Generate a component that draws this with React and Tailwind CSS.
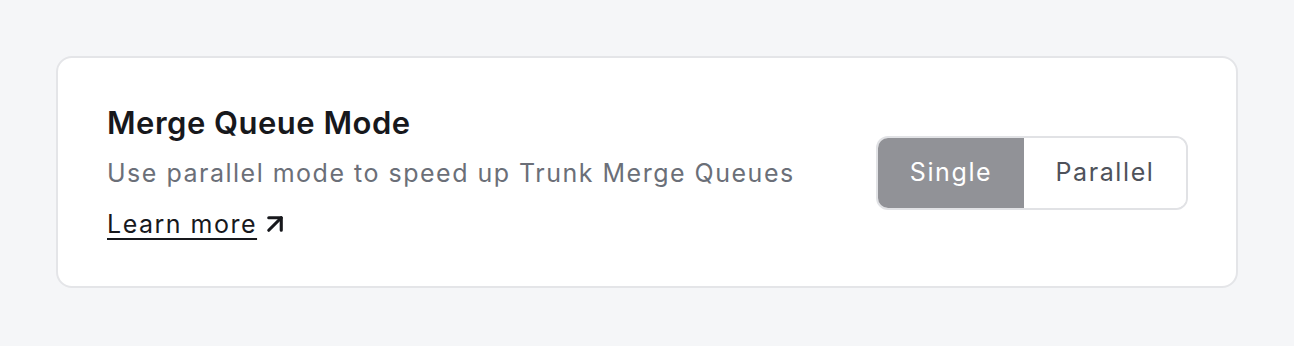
import { ArrowUpRight } from 'lucide-react';

export default function App() {
  return (
    <div className="min-h-screen bg-[#f5f6f8] p-[56px]" style={{ fontFamily: 'Inter, "Noto Sans", sans-serif' }}>
      <div className="flex items-center justify-between rounded-[16px] border-2 border-[#e4e5e8] bg-white pl-[49px] pr-[48px] pt-[47px] pb-[46px]">
        <div className="flex flex-col">
          <h2 className="text-[31px] font-semibold leading-[36px] tracking-[0.5px] text-[#17181c]">Merge Queue Mode</h2>
          <p className="mt-[16px] text-[25px] leading-[32px] tracking-[1.5px] text-[#6b6f78]">
            Use parallel mode to speed up Trunk Merge Queues
          </p>
          <a href="#" className="mt-[19px] flex items-center gap-[3px] text-[25px] leading-[32px] tracking-[1.5px] text-[#17181c]">
            <span className="underline decoration-2 underline-offset-[5px]">Learn more</span>
            <ArrowUpRight className="h-[30px] w-[30px]" strokeWidth={2.5} />
          </a>
        </div>
        <div className="flex h-[74px] overflow-hidden rounded-[12px] border-2 border-[#e1e2e5] text-[25px] tracking-[1.6px]">
          <button className="w-[146px] bg-[#919297] text-white">Single</button>
          <button className="w-[162px] bg-white text-[#4e525b]">Parallel</button>
        </div>
      </div>
    </div>
  );
}
